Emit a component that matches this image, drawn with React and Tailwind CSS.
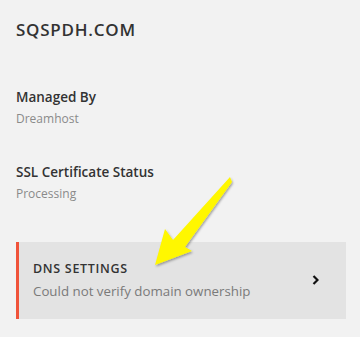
import React from 'react';

const Field = ({ label, value }) => (
  <div>
    <h3 className="text-[13.5px] font-semibold leading-4 text-[#333]">{label}</h3>
    <p className="mt-[6px] text-[12px] leading-4 text-[#8a8a8a]">{value}</p>
  </div>
);

const App = () => {
  return (
    <div
      className="relative h-[337px] w-[360px] overflow-hidden bg-[#f2f2f2] px-4 pt-[20px]"
      style={{ fontFamily: '"Open Sans", Lato, sans-serif' }}
    >
      <h1 className="text-[17px] font-semibold leading-5 tracking-[0.045em] text-[#333]">
        SQSPDH.COM
      </h1>

      <div className="mt-[49px] flex flex-col gap-[37px]">
        <Field label="Managed By" value="Dreamhost" />
        <Field label="SSL Certificate Status" value="Processing" />
      </div>

      <button className="mt-[40px] flex h-[77px] w-[330px] items-center justify-between border-l-[3px] border-[#f0533a] bg-[#e3e3e3] pl-[14px] pr-[27px] text-left">
        <div>
          <div className="text-[12.5px] font-semibold leading-4 tracking-[0.055em] text-[#333]">
            DNS SETTINGS
          </div>
          <div className="mt-[4px] text-[13.3px] leading-5 text-[#7a7a7a]">
            Could not verify domain ownership
          </div>
        </div>
        <svg width="7" height="10" viewBox="0 0 7 10" className="mt-[-1px]">
          <path d="M1.5 1 L5.5 5 L1.5 9" fill="none" stroke="#111" strokeWidth="2.2" />
        </svg>
      </button>

      <svg
        className="pointer-events-none absolute left-0 top-0"
        width="360"
        height="337"
        viewBox="0 0 360 337"
      >
        <defs>
          <filter id="sh" x="-20%" y="-20%" width="140%" height="140%">
            <feDropShadow dx="1" dy="1.5" stdDeviation="1.2" floodColor="#000" floodOpacity="0.35" />
          </filter>
        </defs>
        <polygon
          points="155,265 165,229 173,240 230,177 232,182 185,247 192,251"
          fill="#fff700"
          filter="url(#sh)"
        />
      </svg>
    </div>
  );
};

export default App;
